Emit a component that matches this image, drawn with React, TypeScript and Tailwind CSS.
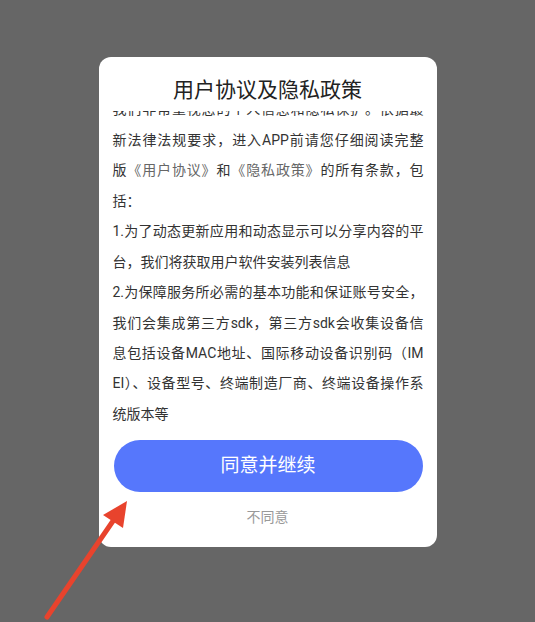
const lines: { text: React.ReactNode; full: boolean }[] = [
  { text: "我们非常重视您的个人信息和隐私保护。依据最", full: true },
  { text: "新法律法规要求，进入APP前请您仔细阅读完整", full: true },
  {
    text: (
      <>
        版<span className="text-[#666666]">《用户协议》</span>和
        <span className="text-[#666666]">《隐私政策》</span>的所有条款，包
      </>
    ),
    full: true,
  },
  { text: "括：", full: false },
  { text: "1.为了动态更新应用和动态显示可以分享内容的平", full: true },
  { text: "台，我们将获取用户软件安装列表信息", full: false },
  { text: "2.为保障服务所必需的基本功能和保证账号安全，", full: true },
  { text: "我们会集成第三方sdk，第三方sdk会收集设备信", full: true },
  { text: "息包括设备MAC地址、国际移动设备识别码（IM", full: true },
  { text: "EI）、设备型号、终端制造厂商、终端设备操作系", full: true },
  { text: "统版本等", full: false },
];

export default function App() {
  return (
    <div
      className="relative flex h-[622px] w-full justify-center overflow-hidden bg-[#666666] pt-[57px]"
      style={{ fontFamily: 'Roboto, "Noto Sans CJK SC", sans-serif' }}
    >
      <div className="flex h-[490px] w-[338px] flex-col rounded-[12px] bg-white">
        <h1 className="pb-[8px] pt-[20px] text-center text-[21px] leading-[26px] text-[#222222]">
          用户协议及隐私政策
        </h1>
        <div className="h-[318px] overflow-hidden pl-[14px] pr-[13px]">
          <div className="-mt-[16.6px] text-[14px] leading-[30.45px] text-[#333333]">
            {lines.map((line, i) => (
              <p
                key={i}
                className={
                  line.full
                    ? "whitespace-nowrap text-justify [text-align-last:justify]"
                    : "whitespace-nowrap"
                }
              >
                {line.text}
              </p>
            ))}
          </div>
        </div>
        <button className="ml-[15px] mt-[11px] h-[52px] w-[309px] rounded-full bg-[#5677fc] text-[19px] text-white">
          同意并继续
        </button>
        <button className="mt-[15px] text-center text-[14px] leading-[20px] text-[#999999]">
          不同意
        </button>
      </div>

      <svg
        className="pointer-events-none absolute left-0 top-0"
        width="535"
        height="622"
        viewBox="0 0 535 622"
      >
        <line
          x1="47"
          y1="617"
          x2="113"
          y2="521"
          stroke="#e8432d"
          strokeWidth="5"
          strokeLinecap="round"
        />
        <polygon points="127,501 103,515 123,528" fill="#e8432d" />
      </svg>
    </div>
  );
}
